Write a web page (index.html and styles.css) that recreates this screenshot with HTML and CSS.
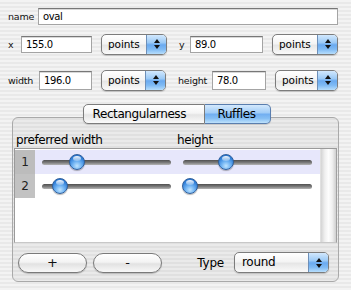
FILE: index.html
```html
<!DOCTYPE html>
<html>
<head>
<meta charset="utf-8">
<link rel="stylesheet" href="styles.css">
</head>
<body>
<div class="window">
  <div class="row row-name">
    <span class="lbl lbl-name">name</span>
    <div class="field field-name">oval</div>
  </div>
  <div class="row row-xy">
    <span class="lbl lbl-x">x</span>
    <div class="field field-x">155.0</div>
    <div class="popup popup-small popup-a"><span class="ptext">points</span><span class="parrows"><svg width="8" height="12" viewBox="0 0 8 12"><path d="M4 1 L7 5 L1 5 Z M4 11 L7 7 L1 7 Z" fill="#111"/></svg></span></div>
    <span class="lbl lbl-y">y</span>
    <div class="field field-y">89.0</div>
    <div class="popup popup-small popup-a"><span class="ptext">points</span><span class="parrows"><svg width="8" height="12" viewBox="0 0 8 12"><path d="M4 1 L7 5 L1 5 Z M4 11 L7 7 L1 7 Z" fill="#111"/></svg></span></div>
  </div>
  <div class="row row-wh">
    <span class="lbl lbl-w">width</span>
    <div class="field field-w">196.0</div>
    <div class="popup popup-small popup-b"><span class="ptext">points</span><span class="parrows"><svg width="8" height="12" viewBox="0 0 8 12"><path d="M4 1 L7 5 L1 5 Z M4 11 L7 7 L1 7 Z" fill="#111"/></svg></span></div>
    <span class="lbl lbl-h">height</span>
    <div class="field field-h">78.0</div>
    <div class="popup popup-small popup-c"><span class="ptext">points</span><span class="parrows"><svg width="8" height="12" viewBox="0 0 8 12"><path d="M4 1 L7 5 L1 5 Z M4 11 L7 7 L1 7 Z" fill="#111"/></svg></span></div>
  </div>

  <div class="group">
    <div class="tabs">
      <span class="seg seg-first">Rectangularness</span><span class="seg seg-sel">Ruffles</span>
    </div>
    <div class="table">
      <div class="thead">
        <span class="th th-1">preferred width</span>
        <span class="th th-2">height</span>
      </div>
      <div class="tbody">
        <div class="rows">
          <div class="trow trow-sel">
            <span class="num">1</span>
            <div class="cell cell-1"><div class="track"><span class="thumb" style="left:27px"></span></div></div>
            <div class="cell cell-2"><div class="track"><span class="thumb" style="left:35px"></span></div></div>
          </div>
          <div class="trow">
            <span class="num">2</span>
            <div class="cell cell-1"><div class="track"><span class="thumb" style="left:10px"></span></div></div>
            <div class="cell cell-2"><div class="track"><span class="thumb" style="left:-1px"></span></div></div>
          </div>
        </div>
        <div class="scroll"></div>
      </div>
    </div>
    <div class="bottom">
      <button class="pill">+</button>
      <button class="pill pill-minus">-</button>
      <span class="type-lbl">Type</span>
      <div class="popup popup-type"><span class="ptext">round</span><span class="parrows"><svg width="8" height="12" viewBox="0 0 8 12"><path d="M4 1 L7 5 L1 5 Z M4 11 L7 7 L1 7 Z" fill="#111"/></svg></span></div>
    </div>
  </div>
</div>
</body>
</html>
```

FILE: styles.css
```css
* { box-sizing: border-box; }
html, body {
  margin: 0;
  padding: 0;
  width: 351px;
  height: 290px;
  overflow: hidden;
}
body {
  background: repeating-linear-gradient(to bottom, #f3f3f3 0px, #f3f3f3 2px, #e9e9e9 2px, #e9e9e9 4px);
  font-family: "DejaVu Sans", sans-serif;
  font-size: 12px;
  color: #000;
}
.window {
  padding: 8px 13px 0 8px;
}
.row {
  display: flex;
  align-items: center;
}
.row-name { height: 17px; }
.row-xy { height: 22px; margin-top: 8px; }
.row-wh { height: 22px; margin-top: 14px; }

.lbl {
  font-size: 9.5px;
  letter-spacing: -0.2px;
  color: #111;
  flex: none;
}
.lbl-name { width: 30px; }
.lbl-x { width: 13px; }
.lbl-y { width: 11px; margin-left: 12px; }
.lbl-w { width: 31px; }
.lbl-h { width: 34px; margin-left: 12px; }

.field {
  height: 17px;
  background: #fff;
  border: 1px solid #a4a4a4;
  border-top-color: #777;
  box-shadow: inset 0 1px 0 #d8d8d8;
  font-size: 10px;
  letter-spacing: -0.4px;
  line-height: 15px;
  padding-left: 4px;
  flex: none;
}
.field-name { flex: 1; }
.field-x { width: 71px; }
.field-y { width: 73px; }
.field-w { width: 53px; height: 19px; line-height: 17px; }
.field-h { width: 54px; height: 19px; line-height: 17px; }

.popup {
  display: flex;
  align-items: stretch;
  height: 21px;
  border: 1px solid #7c7c7c;
  border-radius: 5px;
  background: linear-gradient(to bottom, #ffffff 0%, #f4f4f4 45%, #e6e6e6 55%, #fafafa 100%);
  box-shadow: 0 1px 1px rgba(0,0,0,0.18);
  overflow: hidden;
  flex: none;
}
.popup-small { margin-left: 9px; }
.popup-a { width: 66px; }
.popup-b { width: 65px; }
.popup-c { width: 63px; }
.ptext {
  flex: 1;
  padding-left: 6px;
  line-height: 19px;
}
.popup-small .ptext { font-size: 10.5px; letter-spacing: -0.1px; }
.parrows {
  width: 20px;
  display: flex;
  align-items: center;
  justify-content: center;
  border-left: 1px solid #6d8fb8;
  background: linear-gradient(to bottom, #d2e8fd 0%, #9ccaf6 40%, #6aaaf0 52%, #7fbaf4 75%, #b7defc 100%);
}

.group {
  margin: 26px -1px 0 4px;
  height: 165px;
  border: 1px solid #a9a9a9;
  border-radius: 6px;
  background: rgba(0,0,0,0.035);
  display: flex;
  flex-direction: column;
}
.tabs {
  display: flex;
  justify-content: center;
  margin-top: -14px;
  margin-left: 2px;
  height: 20px;
}
.seg {
  height: 20px;
  line-height: 18px;
  font-size: 12px;
  letter-spacing: -0.4px;
  border: 1px solid #7c7c7c;
  box-shadow: 0 1px 1px rgba(0,0,0,0.15);
}
.seg-first {
  width: 122px;
  padding-left: 9px;
  border-radius: 5px 0 0 5px;
  background: linear-gradient(to bottom, #ffffff 0%, #f5f5f5 45%, #e4e4e4 55%, #fbfbfb 100%);
}
.seg-sel {
  width: 66px;
  padding-left: 13px;
  border-left: none;
  border-color: #5a7eae;
  border-radius: 0 5px 5px 0;
  background: linear-gradient(to bottom, #d4e9fd 0%, #a2cdf7 42%, #72aff1 52%, #86bff4 75%, #bfe2fc 100%);
}

.table {
  margin: 8px 1px 0 1px;
}
.thead {
  display: flex;
  height: 16px;
  line-height: 16px;
  font-size: 12px;
  letter-spacing: -0.4px;
}
.th-1 { width: 162px; padding-left: 2px; }
.th-2 { padding-left: 1px; }

.tbody {
  display: flex;
  height: 95px;
  background: #fff;
  border-top: 1px solid #9a9a9a;
  border-left: 1px solid #9a9a9a;
  border-right: 1px solid #a0a0a0;
  border-bottom: 1px solid #c8c8c8;
}
.rows {
  flex: 1;
  padding-top: 1px;
}
.trow {
  display: flex;
  height: 24px;
  align-items: center;
}
.trow-sel { background: #e7e7fb; }
.num {
  width: 20px;
  height: 24px;
  line-height: 24px;
  text-align: center;
  background: #c2c2c2;
  color: #222;
  font-size: 12px;
  flex: none;
}
.trow-sel .num { background: #bcbcbc; }
.cell {
  display: flex;
  align-items: center;
  height: 24px;
}
.cell-1 { width: 140px; padding: 0 4px 0 7px; }
.cell-2 { flex: 1; padding: 0 8px 0 8px; }
.track {
  position: relative;
  flex: 1;
  height: 5px;
  border-radius: 3px;
  background: linear-gradient(to bottom, #4f4f4f 0%, #7a7a7a 50%, #b4b4b4 100%);
}
.thumb {
  position: absolute;
  top: -6px;
  width: 16px;
  height: 16px;
  border-radius: 50%;
  border: 1px solid #2f5f9c;
  background: radial-gradient(circle at 50% 78%, #bfe4ff 0%, #6fb2f2 35%, #2e7ed8 70%, #2a6cc0 100%);
  box-shadow: 0 1px 1px rgba(0,0,0,0.3);
}
.thumb::after {
  content: "";
  position: absolute;
  left: 3px;
  top: 1px;
  width: 8px;
  height: 5px;
  border-radius: 50%;
  background: linear-gradient(to bottom, rgba(255,255,255,0.95), rgba(255,255,255,0.25));
}
.scroll {
  width: 16px;
  flex: none;
  background: linear-gradient(to right, #d4d4d4 0%, #efefef 25%, #fdfdfd 50%, #f0f0f0 75%, #cfcfcf 100%);
  border-left: 1px solid #e0e0e0;
}

.bottom {
  display: flex;
  align-items: center;
  margin-top: 9px;
  padding: 0 9px 0 5px;
  height: 21px;
}
.pill {
  width: 69px;
  height: 20px;
  margin: 0;
  padding: 0;
  border: 1px solid #7a7a7a;
  border-radius: 10px;
  background: linear-gradient(to bottom, #ffffff 0%, #f3f3f3 45%, #e2e2e2 55%, #f8f8f8 100%);
  box-shadow: 0 1px 1px rgba(0,0,0,0.2);
  font-family: "DejaVu Sans", sans-serif;
  font-size: 13px;
  line-height: 17px;
  color: #111;
}
.pill-minus { margin-left: 6px; }
.type-lbl {
  margin-left: auto;
  margin-right: 10px;
  font-size: 12px;
  letter-spacing: -0.2px;
}
.popup-type { width: 95px; height: 21px; }
.popup-type .ptext { padding-left: 7px; font-size: 12px; letter-spacing: -0.3px; }
```
